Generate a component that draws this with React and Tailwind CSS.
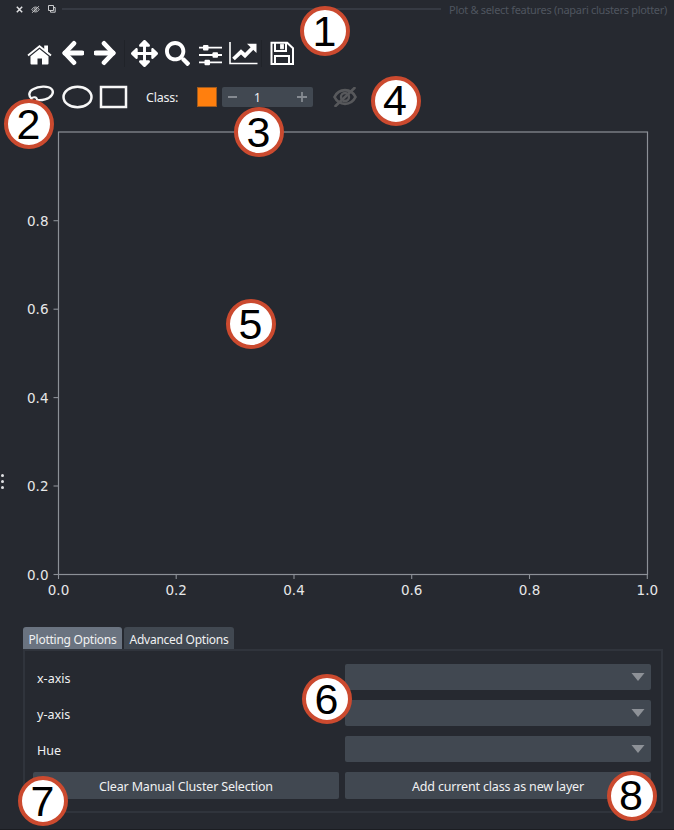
import React from "react";
import { FaArrowsAlt, FaSearch } from "react-icons/fa";

const badges = [
  ["1", "left-[300px] top-[6px]"],
  ["2", "left-[4px] top-[99px]"],
  ["3", "left-[234px] top-[107px]"],
  ["4", "left-[370.5px] top-[75.5px]"],
  ["5", "left-[226px] top-[299px]"],
  ["6", "left-[302px] top-[674px]"],
  ["7", "left-[18px] top-[776px]"],
  ["8", "left-[606.5px] top-[770.5px]"],
];

function Badge({ n, place }) {
  return (
    <div
      className={
        "absolute flex h-[50px] w-[50px] items-center justify-center rounded-full border-4 border-[#cb4a2f] bg-white font-['Liberation_Sans',sans-serif] text-[43px] leading-none text-black " +
        place
      }
    >
      <span className="-translate-x-[0.5px]">{n}</span>
    </div>
  );
}

function HiddenEye({ className }) {
  return (
    <svg className={className} viewBox="0 0 24 20" fill="none" stroke="currentColor">
      <path d="M1.5 10C3.6 5.7 7.4 3.2 12 3.2S20.400 5.700 22.500 10C20.400 14.300 16.600 16.800 12 16.800S3.600 14.300 1.500 10Z" strokeWidth="2.700" />
      <circle cx="12" cy="10" r="4" strokeWidth="2.400" />
      <path d="M2.500 19L21.500 1" strokeWidth="2.600" strokeLinecap="round" />
    </svg>
  );
}

function TitleBar() {
  return (
    <header className="flex h-[18px] items-center pl-[16px] pr-[7px]">
      <svg className="h-[7px] w-[7px] shrink-0" viewBox="0 0 7 7" stroke="#e0e1e3" strokeWidth="1.500">
        <path d="M.8 .8L6.200 6.200M6.200 .8L.8 6.200" />
      </svg>
      <HiddenEye className="ml-[8px] h-[7px] w-[9px] shrink-0 text-[#c9cacc]" />
      <svg className="ml-[8px] h-[8px] w-[8px] shrink-0" viewBox="0 0 8 8" fill="none" stroke="#c9cacc">
        <path d="M.5 .5H5.500V5.500H.5ZM7.200 2.500V7.200H2.500V5.500M5.500 2.500H7.200" />
      </svg>
      <div className="ml-[6px] h-[2px] w-[379px] shrink-0 bg-[#363a43]" />
      <span className="ml-auto whitespace-nowrap pt-[2px] text-[11px] leading-[16px] tracking-[-0.310px] text-[#4f555f]">
        Plot &amp; select features (napari clusters plotter)
      </span>
    </header>
  );
}

function Arrow({ className }) {
  return (
    <svg className={className} viewBox="0 0 22 26" fill="none" stroke="currentColor">
      <path d="M3 13H20" strokeWidth="5" strokeLinecap="round" />
      <path d="M12 3.300L2.800 13L12 22.700" strokeWidth="4.600" strokeLinecap="round" strokeLinejoin="round" />
    </svg>
  );
}

function PlotToolbar() {
  return (
    <div className="flex h-[38px] items-center pl-[27px] text-white">
      <svg className="mt-[3px] h-[20px] w-[25px]" viewBox="0 0 25 20" fill="currentColor">
        <path d="M1 10.500L12.500 1.300L24 10.500" fill="none" stroke="currentColor" strokeWidth="1.900" />
        <path d="M17.200 .5H21V9L17.200 5.500Z" />
        <path d="M12.500 4L21.500 11.200V18.500Q21.500 19.500 20.500 19.500H15V13.500H10.500V19.500H4.500Q3.500 19.500 3.500 18.500V11.200Z" />
      </svg>
      <Arrow className="ml-[10px] h-[26px] w-[22px]" />
      <Arrow className="ml-[10px] h-[26px] w-[22px] rotate-180" />
      <div className="ml-[8px] h-[27px] w-px bg-[#202329]" />
      <FaArrowsAlt className="ml-[6px] h-[27px] w-[27px]" />
      <FaSearch className="ml-[7px] h-[25px] w-[25px]" />
      <svg className="ml-[8px] mt-[3px] h-[22px] w-[25px]" viewBox="0 0 25 22" fill="currentColor">
        <path d="M1 2.800H24V4.600H1ZM1 10.100H24V11.900H1ZM1 17.500H24V19.300H1Z" />
        <rect x="5" y="1" width="5.500" height="5.500" rx="1" />
        <rect x="14.500" y="8.300" width="5.500" height="5.500" rx="1" />
        <rect x="6.500" y="15.700" width="5.500" height="5.500" rx="1" />
      </svg>
      <svg className="ml-[6px] h-[24px] w-[29px]" viewBox="0 0 29 24" fill="none" stroke="currentColor">
        <path d="M1 1V22.500H28.500" strokeWidth="1.600" />
        <path d="M4.500 18L12 10.800L16 14.500L24 6.500" strokeWidth="3.800" />
        <path d="M18 2.800H27.500V12Z" fill="currentColor" stroke="none" />
      </svg>
      <div className="ml-[3px] h-[27px] w-px bg-[#202329]" />
      <svg className="ml-[8px] h-[24px] w-[24px]" viewBox="0 0 24 24" fill="none" stroke="currentColor" strokeWidth="2">
        <path d="M1.500 1.700H17.200L23 7.200V23H1.500Z" />
        <path d="M5 2V10H16V2M5 22.500V15H19V22.500" />
        <path d="M10.500 3.300H13.500V7.800H10.500Z" fill="currentColor" strokeWidth="0.800" />
      </svg>
    </div>
  );
}

function SelectionToolbar() {
  return (
    <div className="flex h-[44px] items-center pl-[27px] text-[#f0f1f2]">
      <svg className="h-[24px] w-[28px]" viewBox="0 0 28 24" fill="none" stroke="#f7f7f7" strokeWidth="2.400">
        <path d="M4.500 13.500C1.200 11 1.700 6.500 6 4.300C11.500 1.200 21 .5 24.500 4C27.800 7.500 24.500 12.500 18 14.300C15 15.200 12 15.300 9.800 14.900" />
        <path d="M4.500 13.500C6 11.500 9.800 12 10 14.500C10 17 6.500 17.500 4.500 15.500Z" strokeWidth="2" />
      </svg>
      <svg className="ml-[7px] h-[24px] w-[31px]" viewBox="0 0 31 24" fill="none" stroke="#f7f7f7" strokeWidth="2.500">
        <ellipse cx="15.500" cy="12" rx="14" ry="10.300" />
      </svg>
      <svg className="ml-[6px] h-[24px] w-[29px]" viewBox="0 0 29 24" fill="none" stroke="#f7f7f7" strokeWidth="2.500">
        <rect x="2" y="2" width="25" height="20" />
      </svg>
      <span className="ml-[18px] w-[51px] pt-[2px] text-[12.500px] leading-[18px] tracking-[-0.200px]">Class:</span>
      <div className="h-[20px] w-[20px] border border-[#a15b1e] bg-[#ff7f0e]" />
      <div className="ml-[5px] flex h-[20px] w-[91px] items-center rounded-[2px] bg-[#414851]">
        <div className="ml-[6px] h-[2px] w-[9px] bg-[#858a91]" />
        <span className="ml-[17px] pt-[1px] text-[12px] leading-[18px]">1</span>
        <svg className="ml-auto mr-[6px] h-[10px] w-[10px]" viewBox="0 0 10 10" stroke="#858a91" strokeWidth="1.800">
          <path d="M0 5H10M5 0V10" />
        </svg>
      </div>
      <HiddenEye className="ml-[20px] h-[20px] w-[24px] text-[#57585b]" />
    </div>
  );
}

const xTicks = [[58.500, "0.0"], [176.200, "0.2"], [294, "0.4"], [411.700, "0.6"], [529.500, "0.8"], [647.300, "1.0"]];
const yTicks = [[456.500, "0.0"], [368, "0.2"], [279.600, "0.4"], [191.200, "0.6"], [102.700, "0.8"]];

function Plot() {
  return (
    <svg className="block h-[509px] w-[674px]" viewBox="0 0 674 509">
      <rect x="58.500" y="14" width="589" height="442.500" fill="none" stroke="#8c9097" strokeWidth="1.200" />
      <g stroke="#8c9097" strokeWidth="1.100">
        {xTicks.map(([x]) => <path key={x} d={`M${x} 456V461`} />)}
        {yTicks.map(([y]) => <path key={y} d={`M53.500 ${y}H58.500`} />)}
      </g>
      <g fill="#e6e7e8" fontFamily="DejaVu Sans, sans-serif" fontSize="13.500">
        {xTicks.map(([x, t]) => <text key={x} x={x} y="477" textAnchor="middle">{t}</text>)}
        {yTicks.map(([y, t]) => <text key={y} x="48.500" y={y + 5} textAnchor="end">{t}</text>)}
      </g>
      <g fill="#e0e1e3">
        <circle cx="2.500" cy="357.500" r="1.500" />
        <circle cx="2.500" cy="363.500" r="1.500" />
        <circle cx="2.500" cy="369.500" r="1.500" />
      </g>
    </svg>
  );
}

function SelectRow({ label }) {
  return (
    <div className="flex h-[26px] items-center">
      <span className="w-[308px] pt-[4px]">{label}</span>
      <div className="flex h-[26px] w-[306px] items-center justify-end rounded-[2px] bg-[#414851] pr-[6px]">
        <svg className="h-[8px] w-[14px]" viewBox="0 0 14 8" fill="#8d9197">
          <path d="M.5 0H13.500L7 8Z" />
        </svg>
      </div>
    </div>
  );
}

function Options() {
  return (
    <section className="px-[23px] text-[12.500px] leading-[18px]">
      <div className="flex h-[22px] gap-[2px] text-[12px] tracking-[-0.250px]">
        <div className="flex w-[99px] items-center justify-center whitespace-nowrap rounded-t-[3px] bg-[#6a7380] pt-[3px]">Plotting Options</div>
        <div className="flex w-[110px] items-center justify-center whitespace-nowrap rounded-t-[3px] bg-[#414851] pt-[3px]">Advanced Options</div>
      </div>
      <div className="flex h-[164px] w-[640px] flex-col gap-[10px] rounded-b-[2px] border-2 border-[#30343c] pl-[12px] pt-[13px]">
        <SelectRow label="x-axis" />
        <SelectRow label="y-axis" />
        <SelectRow label="Hue" />
        <div className="-ml-[4px] flex h-[27px] gap-[6px] tracking-[-0.170px]">
          <button className="w-[306px] rounded-[2px] bg-[#414851] pt-[2px]">Clear Manual Cluster Selection</button>
          <button className="w-[306px] rounded-[2px] bg-[#414851] pt-[2px]">Add current class as new layer</button>
        </div>
      </div>
    </section>
  );
}

export default function App() {
  return (
    <main className="relative h-[830px] w-[674px] overflow-hidden border-b border-[#1b1d22] bg-[#262930] font-['Noto_Sans',sans-serif] text-[#f0f1f2]">
      <TitleBar />
      <div className="pt-[16px]">
        <PlotToolbar />
      </div>
      <div className="pt-[3px]">
        <SelectionToolbar />
      </div>
      <div className="-mt-[1px]">
        <Plot />
      </div>
      <Options />
      {badges.map(([n, place]) => <Badge key={n} n={n} place={place} />)}
    </main>
  );
}
